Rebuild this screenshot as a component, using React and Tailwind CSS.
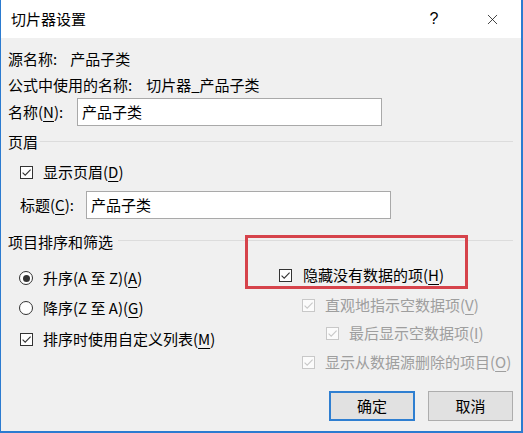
import { X } from 'lucide-react';

function U({ children }) {
  return <span className="underline underline-offset-[3px] decoration-1">{children}</span>;
}

function Check({ disabled }) {
  return (
    <span
      className={`w-[13px] h-[13px] border flex items-center justify-center shrink-0 ${
        disabled ? 'border-[#c8c8c8] bg-[#fbfbfb]' : 'border-[#333333] bg-white'
      }`}
    >
      <svg width="11" height="11" viewBox="0 0 11 11">
        <path
          d="M1.6 5.6 L4.2 8.2 L9.6 2.6"
          fill="none"
          stroke={disabled ? '#c8c8c8' : '#333333'}
          strokeWidth="1.1"
        />
      </svg>
    </span>
  );
}

function Radio({ checked }) {
  return (
    <span className="w-[14px] h-[14px] rounded-full border border-[#333333] bg-white flex items-center justify-center shrink-0">
      {checked && <span className="w-[7px] h-[7px] rounded-full bg-[#333333]" />}
    </span>
  );
}

function Row({ className = '', children }) {
  return <div className={`h-5 flex items-center whitespace-nowrap ${className}`}>{children}</div>;
}

export default function App() {
  return (
    <div className="w-[523px] h-[433px] flex flex-col border-l border-r-2 border-b-2 border-[#2b7bd0] font-[Noto_Sans_CJK_SC,sans-serif] text-[15px] leading-5 text-black overflow-hidden">
      {/* Title bar */}
      <div className="h-[38px] bg-white flex items-center shrink-0">
        <div className="flex-1 pl-[10px]">切片器设置</div>
        <div className="w-[58px] h-full flex items-center justify-center font-[Liberation_Sans,sans-serif] text-[16px]">?</div>
        <div className="w-[58px] h-full flex items-center justify-center">
          <X size={17} strokeWidth={1.1} color="#111" />
        </div>
      </div>

      {/* Body */}
      <div className="relative flex-1 bg-[#f0f0f0] pl-[7px] pr-[8px] pt-[11px] flex flex-col">
        <Row>
          <span>源名称:</span>
          <span className="ml-[13px]">产品子类</span>
        </Row>
        <Row className="mt-[6px]">
          <span>公式中使用的名称:</span>
          <span className="ml-[14px]">切片器_产品子类</span>
        </Row>

        <div className="mt-[3px] flex items-center">
          <span className="w-[69px] whitespace-nowrap">
            名称(<U>N</U>):
          </span>
          <div className="w-[305px] h-[28px] border border-[#a9a9a9] bg-white flex items-center pl-[4px]">产品子类</div>
        </div>

        <Row className="mt-[6px]">
          <span>页眉</span>
          <div className="flex-1 ml-[2px] h-px bg-[#dcdcdc] -mt-[2px]" />
        </Row>

        <Row className="mt-[10px] ml-[12px] gap-[10px]">
          <Check />
          <span>
            显示页眉(<U>D</U>)
          </span>
        </Row>

        <div className="mt-[9px] ml-[12px] flex items-center">
          <span className="w-[66px] whitespace-nowrap">
            标题(<U>C</U>):
          </span>
          <div className="w-[305px] h-[28px] border border-[#a9a9a9] bg-white flex items-center pl-[4px]">产品子类</div>
        </div>

        <Row className="mt-[13px]">
          <span>项目排序和筛选</span>
          <div className="flex-1 ml-[5px] h-px bg-[#dcdcdc] -mt-[4px]" />
        </Row>

        <div className="flex">
          <div className="w-[270px] pl-[11px] flex flex-col">
            <Row className="mt-[16px] gap-[10px]">
              <Radio checked />
              <span>
                升序(A 至 Z)(<U>A</U>)
              </span>
            </Row>
            <Row className="mt-[10px] gap-[10px]">
              <Radio />
              <span>
                降序(Z 至 A)(<U>G</U>)
              </span>
            </Row>
            <Row className="mt-[11px] ml-[1px] gap-[10px]">
              <Check />
              <span>
                排序时使用自定义列表(<U>M</U>)
              </span>
            </Row>
          </div>
          <div className="flex flex-col">
            <Row className="mt-[13px] ml-[1px] gap-[11px]">
              <Check />
              <span>
                隐藏没有数据的项(<U>H</U>)
              </span>
            </Row>
            <Row className="mt-[10px] ml-[24px] gap-[10px] text-[#9e9e9e]">
              <Check disabled />
              <span>
                直观地指示空数据项(<U>V</U>)
              </span>
            </Row>
            <Row className="mt-[8px] ml-[48px] gap-[10px] text-[#9e9e9e]">
              <Check disabled />
              <span>
                最后显示空数据项(<U>I</U>)
              </span>
            </Row>
            <Row className="mt-[9px] ml-[24px] gap-[10px] text-[#9e9e9e]">
              <Check disabled />
              <span>
                显示从数据源删除的项目(<U>O</U>)
              </span>
            </Row>
          </div>
        </div>

        <div className="mt-[19px] flex justify-end gap-[13px]">
          <button className="w-[86px] h-[30px] border-2 border-[#2f7fd1] bg-[#e1e1e1] flex items-center justify-center">确定</button>
          <button className="w-[85px] h-[30px] border border-[#adadad] bg-[#e1e1e1] flex items-center justify-center">取消</button>
        </div>

        {/* highlight annotation */}
        <div className="absolute left-[244px] top-[197px] w-[223px] h-[54px] border-[3px] border-[#d6434b] pointer-events-none" />
      </div>
    </div>
  );
}
